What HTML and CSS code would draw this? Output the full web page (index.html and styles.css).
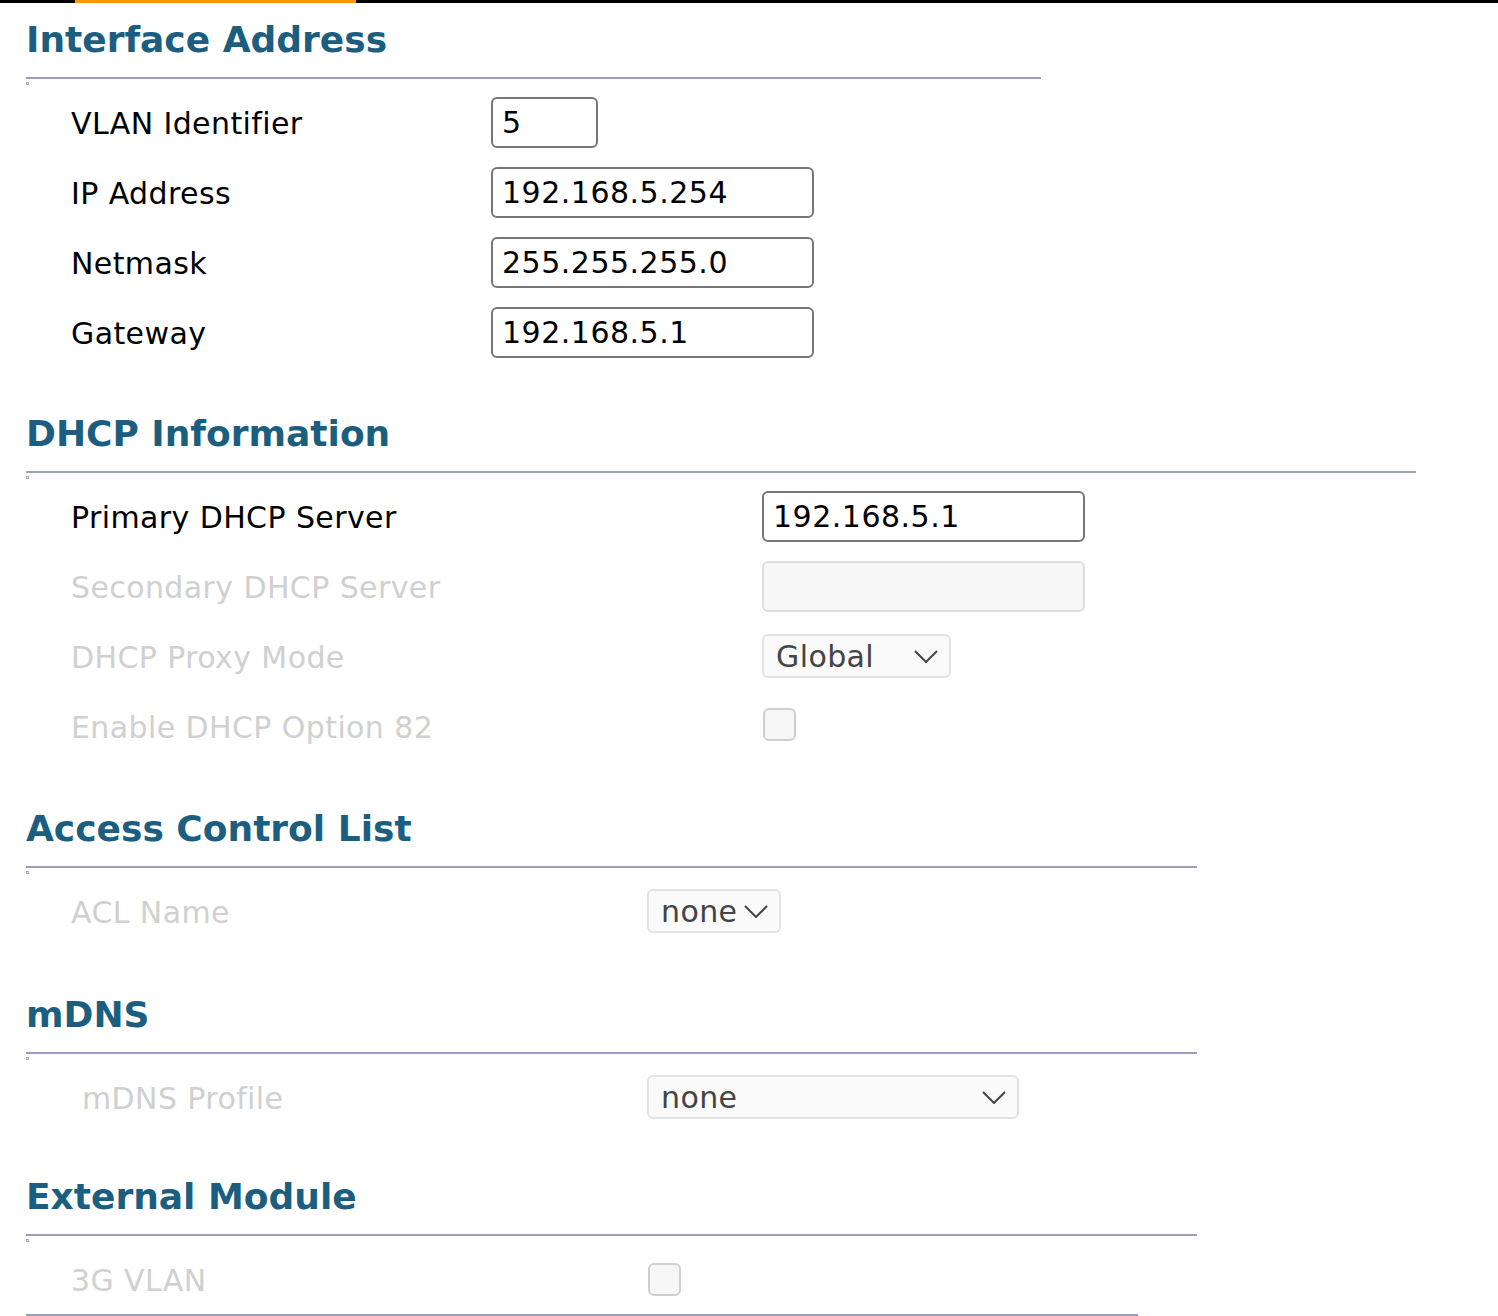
FILE: index.html
```html
<!DOCTYPE html>
<html lang="en">
<head>
    <meta charset="UTF-8">
    <title>Interface Settings</title>
    <link rel="stylesheet" href="styles.css">
</head>
<body>
    <div class="topbar"><span class="tab-mark"></span></div>

    <div class="page">
        <section class="section">
            <h2 class="section-title rule-short">Interface Address</h2>
            <span class="dot"></span>
            <div class="rows cols-491">
                <div class="row">
                    <label>VLAN Identifier</label>
                    <input type="text" class="field field-tiny" value="5">
                </div>
                <div class="row">
                    <label>IP Address</label>
                    <input type="text" class="field" value="192.168.5.254">
                </div>
                <div class="row">
                    <label>Netmask</label>
                    <input type="text" class="field" value="255.255.255.0">
                </div>
                <div class="row">
                    <label>Gateway</label>
                    <input type="text" class="field" value="192.168.5.1">
                </div>
            </div>
        </section>

        <section class="section section-dhcp">
            <h2 class="section-title rule-long">DHCP Information</h2>
            <span class="dot"></span>
            <div class="rows cols-762">
                <div class="row">
                    <label>Primary DHCP Server</label>
                    <input type="text" class="field" value="192.168.5.1">
                </div>
                <div class="row disabled">
                    <label>Secondary DHCP Server</label>
                    <input type="text" class="field" value="" disabled>
                </div>
                <div class="row disabled">
                    <label>DHCP Proxy Mode</label>
                    <div class="select select-global">
                        <span>Global</span>
                        <svg class="chevron" viewBox="0 0 24 13"><path d="M1 1 L12 12 L23 1"/></svg>
                    </div>
                </div>
                <div class="row disabled">
                    <label>Enable DHCP Option 82</label>
                    <span class="check check-up"></span>
                </div>
            </div>
        </section>

        <section class="section section-acl">
            <h2 class="section-title rule-mid">Access Control List</h2>
            <span class="dot"></span>
            <div class="rows cols-647">
                <div class="row disabled">
                    <label>ACL Name</label>
                    <div class="select select-small">
                        <span>none</span>
                        <svg class="chevron" viewBox="0 0 24 13"><path d="M1 1 L12 12 L23 1"/></svg>
                    </div>
                </div>
            </div>
        </section>

        <section class="section section-mdns">
            <h2 class="section-title rule-mid">mDNS</h2>
            <span class="dot"></span>
            <div class="rows cols-647">
                <div class="row disabled">
                    <label class="indent">mDNS Profile</label>
                    <div class="select select-wide">
                        <span>none</span>
                        <svg class="chevron" viewBox="0 0 24 13"><path d="M1 1 L12 12 L23 1"/></svg>
                    </div>
                </div>
            </div>
        </section>

        <section class="section section-ext">
            <h2 class="section-title rule-mid">External Module</h2>
            <span class="dot"></span>
            <div class="rows cols-647">
                <div class="row disabled">
                    <label>3G VLAN</label>
                    <span class="check"></span>
                </div>
            </div>
            <div class="bottom-rule"></div>
        </section>
    </div>
</body>
</html>
```

FILE: styles.css
```css
:root {
    --title-color: #1b5e7f;
    --rule-color: #9b9fbd;
    --muted: #d0d0d0;
}

* {
    box-sizing: border-box;
    margin: 0;
    padding: 0;
}

body {
    background: #fff;
    color: #000;
    font-family: 'DejaVu Sans', Verdana, sans-serif;
    overflow: hidden;
}

.topbar {
    height: 3px;
    background: #000;
}

.tab-mark {
    display: block;
    margin-left: 75px;
    width: 281px;
    height: 3px;
    background: #ff9800;
}

.page {
    padding-left: 26px;
}

.section {
    margin-top: 45px;
}

.section:first-child {
    margin-top: 15px;
}

/* the gaps between blocks are not quite even on the original page */
.section-acl { margin-top: 46px; }
.section-mdns { margin-top: 47px; }
.section-ext { margin-top: 43px; }

.section-title {
    font-size: 36px;
    font-weight: 700;
    line-height: 44px;
    color: var(--title-color);
    padding-bottom: 15px;
    border-bottom: 2px solid var(--rule-color);
}

.rule-short { width: 1015px; }
.rule-long { width: 1390px; }
.rule-mid { width: 1171px; }

.dot {
    display: block;
    width: 3px;
    height: 3px;
    margin-top: 3px;
    border: 1px solid #aaa;
}

.rows {
    margin-top: 2px;
}

.row {
    display: grid;
    align-items: center;
    height: 70px;
}

.cols-491 .row { grid-template-columns: 465px auto; }
.cols-762 .row { grid-template-columns: 736px auto; }
.cols-647 .row { grid-template-columns: 621px auto; }

.row label {
    font-size: 30px;
    letter-spacing: 0.4px;
    padding-left: 45px;
    padding-top: 3px;
    color: #000;
}

.row label.indent {
    padding-left: 56px;
}

.disabled label {
    color: var(--muted);
}

.field {
    width: 323px;
    height: 51px;
    border: 2px solid #767676;
    border-radius: 6px;
    padding: 0 9px;
    font-family: 'DejaVu Sans', Verdana, sans-serif;
    font-size: 30px;
    letter-spacing: 0.5px;
    color: #000;
    background: #fff;
}

.field-tiny {
    width: 107px;
}

.field:disabled {
    background: #f7f7f7;
    border-color: #dedede;
}

.select {
    display: flex;
    align-items: center;
    justify-content: space-between;
    height: 44px;
    padding: 0 11px 0 12px;
    border: 2px solid #e3e3e3;
    border-radius: 6px;
    background: #fafafa;
    font-size: 30px;
    letter-spacing: 0.4px;
    color: #444;
}

.select-global { width: 189px; }
.select-small { width: 134px; }
.select-wide { width: 372px; }

.chevron {
    width: 24px;
    height: 13px;
    fill: none;
    stroke: #444;
    stroke-width: 2;
}

.check {
    display: block;
    width: 33px;
    height: 33px;
    margin-left: 1px;
    border: 2px solid #cfcfcf;
    border-radius: 6px;
    background: #f7f7f7;
}

.check-up {
    margin-bottom: 4px;
}

.bottom-rule {
    width: 1112px;
    margin-top: 0;
    border-top: 2px solid var(--rule-color);
}
```
